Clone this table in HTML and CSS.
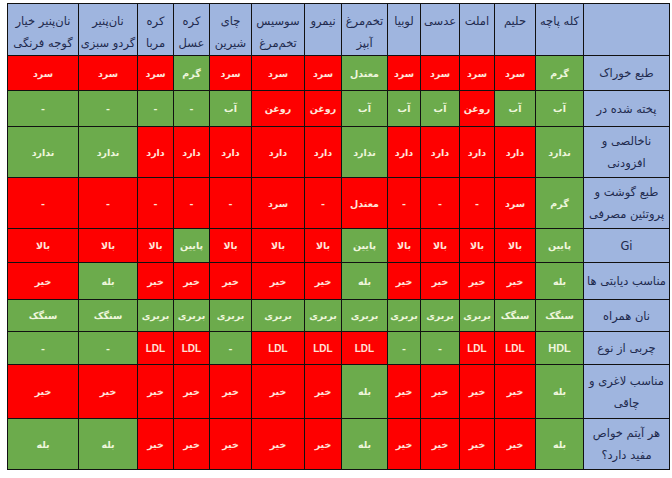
FILE: index.html
```html
<!DOCTYPE html>
<html lang="fa">
<head>
<meta charset="utf-8">
<link rel="stylesheet" href="styles.css">
</head>
<body>
<table class="t" dir="rtl">
<colgroup>
<col class="c86"><col class="c48"><col class="c41"><col class="c35"><col class="c39"><col class="c33"><col class="c46"><col class="c37"><col class="c53"><col class="c42"><col class="c36"><col class="c36"><col class="c59"><col class="c71">
</colgroup>
<tr class="h52">
<th class="lab"></th>
<th>کله پاچه</th><th>حلیم</th><th>املت</th><th>عدسی</th><th>لوبیا</th><th>تخم‌مرغ<br>آبپز</th><th>نیمرو</th><th>سوسیس<br>تخم‌مرغ</th><th>چای<br>شیرین</th><th>کره<br>عسل</th><th>کره<br>مربا</th><th>نان‌پنیر<br>گردو سبزی</th><th>نان‌پنیر خیار<br>گوجه فرنگی</th>
</tr>
<tr class="h35">
<td class="lab">طبع خوراک</td>
<td class="g">گرم</td><td class="r">سرد</td><td class="r">سرد</td><td class="r">سرد</td><td class="r">سرد</td><td class="g">معتدل</td><td class="r">سرد</td><td class="r">سرد</td><td class="r">سرد</td><td class="g">گرم</td><td class="r">سرد</td><td class="r">سرد</td><td class="r">سرد</td>
</tr>
<tr class="h36">
<td class="lab">پخته شده در</td>
<td class="g">آب</td><td class="g">آب</td><td class="r">روغن</td><td class="g">آب</td><td class="g">آب</td><td class="g">آب</td><td class="r">روغن</td><td class="r">روغن</td><td class="g">آب</td><td class="g">-</td><td class="g">-</td><td class="g">-</td><td class="g">-</td>
</tr>
<tr class="h51">
<td class="lab">ناخالصی و<br>افزودنی</td>
<td class="g">ندارد</td><td class="r">دارد</td><td class="r">دارد</td><td class="r">دارد</td><td class="r">دارد</td><td class="g">ندارد</td><td class="r">دارد</td><td class="r">دارد</td><td class="r">دارد</td><td class="r">دارد</td><td class="r">دارد</td><td class="g">ندارد</td><td class="g">ندارد</td>
</tr>
<tr class="h51">
<td class="lab">طبع گوشت و<br>پروتئین مصرفی</td>
<td class="g">گرم</td><td class="r">سرد</td><td class="r">-</td><td class="r">-</td><td class="r">-</td><td class="r">معتدل</td><td class="r">-</td><td class="r">سرد</td><td class="r">-</td><td class="r">-</td><td class="r">-</td><td class="r">-</td><td class="r">-</td>
</tr>
<tr class="h34">
<td class="lab">Gi</td>
<td class="g">پایین</td><td class="r">بالا</td><td class="r">بالا</td><td class="r">بالا</td><td class="r">بالا</td><td class="g">پایین</td><td class="r">بالا</td><td class="r">بالا</td><td class="r">بالا</td><td class="g">پایین</td><td class="r">بالا</td><td class="r">بالا</td><td class="r">بالا</td>
</tr>
<tr class="h37">
<td class="lab">مناسب دیابتی ها</td>
<td class="g">بله</td><td class="r">خیر</td><td class="r">خیر</td><td class="r">خیر</td><td class="r">خیر</td><td class="g">بله</td><td class="r">خیر</td><td class="r">خیر</td><td class="r">خیر</td><td class="r">خیر</td><td class="r">خیر</td><td class="g">بله</td><td class="r">خیر</td>
</tr>
<tr class="h32">
<td class="lab">نان همراه</td>
<td class="g">سنگک</td><td class="g">سنگک</td><td class="g">بربری</td><td class="g">بربری</td><td class="g">بربری</td><td class="g">بربری</td><td class="g">بربری</td><td class="g">بربری</td><td class="g">بربری</td><td class="g">بربری</td><td class="g">بربری</td><td class="g">سنگک</td><td class="g">سنگک</td>
</tr>
<tr class="h33">
<td class="lab">چربی از نوع</td>
<td class="g lat">HDL</td><td class="r lat">LDL</td><td class="r lat">LDL</td><td class="g">-</td><td class="g">-</td><td class="r lat">LDL</td><td class="r lat">LDL</td><td class="r lat">LDL</td><td class="g">-</td><td class="r lat">LDL</td><td class="r lat">LDL</td><td class="g">-</td><td class="g">-</td>
</tr>
<tr class="h54">
<td class="lab">مناسب لاغری و<br>چاقی</td>
<td class="g">بله</td><td class="r">خیر</td><td class="r">خیر</td><td class="r">خیر</td><td class="r">خیر</td><td class="g">بله</td><td class="r">خیر</td><td class="r">خیر</td><td class="r">خیر</td><td class="r">خیر</td><td class="r">خیر</td><td class="r">خیر</td><td class="r">خیر</td>
</tr>
<tr class="h51">
<td class="lab">هر آیتم خواص<br>مفید دارد؟</td>
<td class="g">بله</td><td class="r">خیر</td><td class="r">خیر</td><td class="r">خیر</td><td class="r">خیر</td><td class="g">بله</td><td class="r">خیر</td><td class="r">خیر</td><td class="r">خیر</td><td class="r">خیر</td><td class="r">خیر</td><td class="g">بله</td><td class="g">بله</td>
</tr>
</table>
</body>
</html>
```
FILE: styles.css
```css
html, body {
  margin: 0;
  padding: 0;
  background: #ffffff;
}
body {
  padding: 3px 0 0 7px;
  font-family: "DejaVu Sans", sans-serif;
}
.t {
  border-collapse: collapse;
  table-layout: fixed;
  width: 662px;
}
.c86 { width: 86px; }
.c48 { width: 48px; }
.c41 { width: 41px; }
.c35 { width: 35px; }
.c39 { width: 39px; }
.c33 { width: 33px; }
.c46 { width: 46px; }
.c37 { width: 37px; }
.c53 { width: 53px; }
.c42 { width: 42px; }
.c36 { width: 36px; }
.c59 { width: 59px; }
.c71 { width: 71px; }
.t th, .t td {
  border: 1px solid #111111;
  padding: 0;
  text-align: center;
  overflow: hidden;
  white-space: nowrap;
}
.t th {
  background: #9fb5df;
  color: #1e2a4e;
  font-size: 11.5px;
  font-weight: normal;
  line-height: 22px;
  vertical-align: top;
  padding-top: 6px;
}
.t td {
  font-size: 9.5px;
  font-weight: bold;
  vertical-align: middle;
}
.t td.lab {
  background: #9fb5df;
  color: #1e2a4e;
  font-size: 11.5px;
  font-weight: normal;
  line-height: 22px;
}
.t td.r {
  background: #fe0000;
  color: #ffe3d8;
}
.t td.g {
  background: #6cab4c;
  color: #eef6dc;
}
.t td.lat {
  font-family: "Liberation Sans", sans-serif;
  font-size: 10px;
}
.t td.g.lat {
  font-size: 11px;
}
.h52 { height: 52px; }
.h51 { height: 51px; }
.h54 { height: 54px; }
.h35 { height: 35px; }
.h36 { height: 36px; }
.h37 { height: 37px; }
.h34 { height: 34px; }
.h33 { height: 33px; }
.h32 { height: 32px; }
```
